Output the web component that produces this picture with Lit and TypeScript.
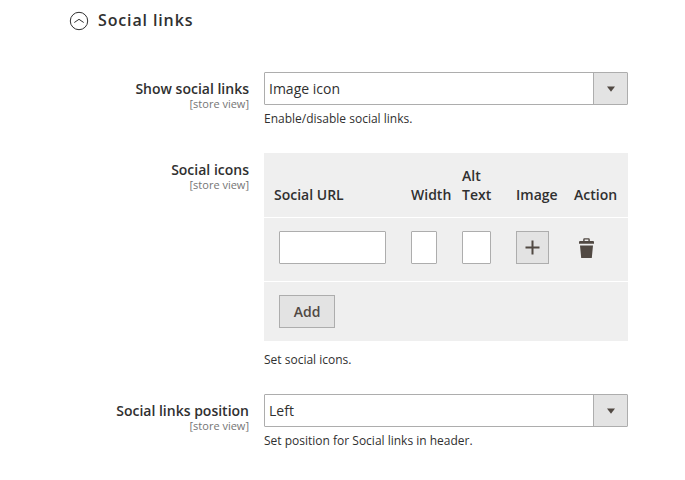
import { LitElement, html, css } from "lit";
import { customElement, property } from "lit/decorators.js";

@customElement("config-field")
class ConfigField extends LitElement {
  @property() label = "";
  @property() note = "";
  static styles = css`
    :host { display: grid; grid-template-columns: 249px 364px; column-gap: 15px; }
    .side { text-align: right; padding-top: 7px; }
    .label { font-weight: 600; line-height: 19px; }
    .scope { font-size: 11px; line-height: 12px; color: #757575; }
    .note { font-size: 12px; line-height: 16px; margin-top: var(--note-gap, 6px); }
  `;
  render() {
    return html`<div class="side"><div class="label">${this.label}</div><div class="scope">[store view]</div></div>
      <div><slot></slot><div class="note">${this.note}</div></div>`;
  }
}

@customElement("select-box")
class SelectBox extends LitElement {
  @property() value = "";
  static styles = css`
    :host { display: flex; box-sizing: border-box; height: 33px; border: 1px solid #adadad; border-radius: 1px; background: #fff; }
    .value { flex: 1; padding-left: 4px; line-height: 31px; }
    .arrow { width: 33px; border-left: 1px solid #adadad; background: #e3e3e3; display: flex; align-items: center; justify-content: center; }
  `;
  render() {
    return html`<div class="value">${this.value}</div>
      <div class="arrow"><svg width="8" height="6" viewBox="0 0 8 6"><path d="M0 0.5H8L4 5.8Z" fill="#514943"/></svg></div>`;
  }
}

@customElement("app-root")
class AppRoot extends LitElement {
  static styles = css`
    :host { display: block; width: 685px; height: 480px; overflow: hidden; background: #fff; color: #303030; font: 400 14px "Open Sans", sans-serif; }
    .head { display: flex; align-items: center; gap: 9px; height: 40px; padding-left: 69px; font-size: 16px; font-weight: 600; letter-spacing: .87px; }
    .head svg { margin-top: 2px; }
    .head span { line-height: 22px; margin-bottom: 1px; }
    .fields { display: flex; flex-direction: column; gap: 26px; padding-top: 32px; }
    .icons { --note-gap: 11px; }
    .table { background: #efefef; height: 188px; display: grid; grid-template-rows: 64px 63px 59px; row-gap: 1px; }
    .row { display: grid; grid-template-columns: 137px 51px 54px 58px 54px; padding-left: 10px; box-sizing: border-box; }
    .titles { font-weight: 600; line-height: 19px; align-items: end; padding-bottom: 13px; }
    .line { box-shadow: 0 1px #fff; }
    .inputs { align-items: start; padding-top: 13px; }
    .input { box-sizing: border-box; height: 33px; border: 1px solid #adadad; border-radius: 1px; background: #fff; }
    .url { width: 107px; margin-left: 5px; }
    .width { width: 26px; }
    .alt { width: 29px; }
    .button { box-sizing: border-box; display: flex; align-items: center; justify-content: center; height: 33px; border: 1px solid #adadad; background: #e3e3e3; font-weight: 600; color: #514943; }
    .plus { width: 33px; }
    .trash { margin: 7px 0 0 5px; }
    .foot { padding: 13px 15px; }
    .add { width: 56px; }
  `;
  render() {
    return html`
      <div class="head">
        <svg width="20" height="20" viewBox="0 0 20 20" fill="none" stroke="#303030"><circle cx="10" cy="10" r="8.7" stroke-width="1"/><path d="M5.3 11.5L10 8.3L14.7 11.5" stroke-width="1"/></svg>
        <span>Social links</span>
      </div>
      <div class="fields">
        <config-field label="Show social links" note="Enable/disable social links."><select-box value="Image icon"></select-box></config-field>
        <config-field label="Social icons" note="Set social icons." class="icons">
          <div class="table">
            <div class="row titles line"><span>Social URL</span><span>Width</span><span>Alt<br>Text</span><span>Image</span><span>Action</span></div>
            <div class="row inputs line">
              <div class="input url"></div><div class="input width"></div><div class="input alt"></div>
              <div class="button plus"><svg width="15" height="15" viewBox="0 0 15 15"><path d="M7.5 .5V14.5M.5 7.5H14.5" stroke="#514943" stroke-width="2"/></svg></div>
              <svg class="trash" width="15" height="20" viewBox="0 0 15 20" fill="#514943"><path d="M0 4Q0 3 1 3H4.2V1.4Q4.2 .2 5.4 .2H9.6Q10.8 .2 10.8 1.4V3H14Q15 3 15 4V5.8H0ZM5.6 3H9.4V1.5H5.6ZM1 7.6H14L12.8 20H2.2Z" fill-rule="evenodd"/></svg>
            </div>
            <div class="foot"><div class="button add">Add</div></div>
          </div>
        </config-field>
        <config-field label="Social links position" note="Set position for Social links in header."><select-box value="Left"></select-box></config-field>
      </div>`;
  }
}
